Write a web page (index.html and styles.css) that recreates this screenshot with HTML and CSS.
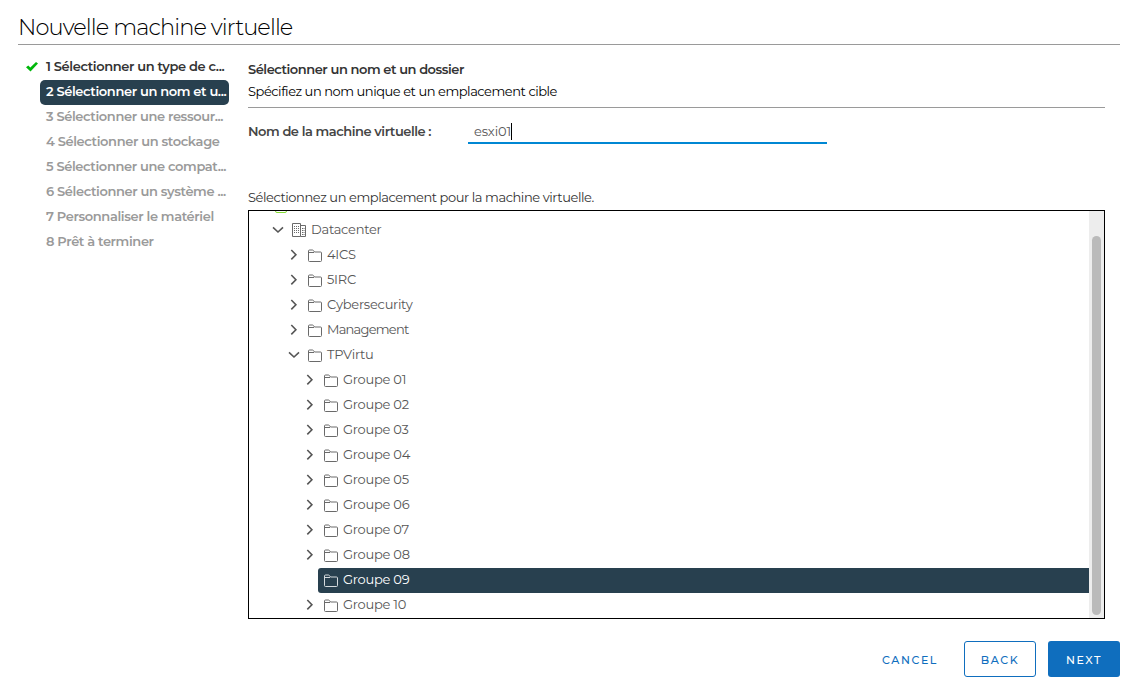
FILE: index.html
```html
<!DOCTYPE html>
<html lang="fr">
<head>
<meta charset="utf-8">
<title>Nouvelle machine virtuelle</title>
<link rel="stylesheet" href="styles.css">
</head>
<body>
<svg class="sprite" aria-hidden="true">
  <symbol id="right" viewBox="0 0 16 16"><path d="M5.300 3l4.600 4.700-4.600 4.700" fill="none" stroke="currentColor" stroke-width="1.600"/></symbol>
  <symbol id="down" viewBox="0 0 16 16"><path d="M3 5.400l5 4.600 5-4.600" fill="none" stroke="currentColor" stroke-width="1.600"/></symbol>
  <symbol id="folder" viewBox="0 0 16 16"><path d="M1.500 6V4q0-1 1-1h3q.6 0 1 .6l1 1.400h6q1 0 1 1v7.500q0 1-1 1h-11q-1 0-1-1zM1.500 5.500h5.500" fill="none" stroke="currentColor"/></symbol>
  <symbol id="datacenter" viewBox="0 0 16 16"><path d="M1.500 1.500h8v13h-8zM9.500 3.500h5v11h-5" fill="none" stroke="currentColor"/><path d="M3.500 4v8M5.500 4v8M7.500 4v8M11.500 6v7M13 6v7" fill="none" stroke="currentColor" stroke-dasharray="1 1"/></symbol>
</svg>
<div class="wizard">
  <h1 class="title">Nouvelle machine virtuelle</h1>
  <div class="body">
    <ol class="steps">
      <li class="step done"><svg class="check" viewBox="0 0 14 12"><path d="M1 6.200l2.300-1.800 2 2L11 1l2 1.400-7.500 8z" fill="#00b70b"/></svg><span>1 Sélectionner un type de c...</span></li>
      <li class="step current"><span>2 Sélectionner un nom et u...</span></li>
      <li class="step"><span>3 Sélectionner une ressour...</span></li>
      <li class="step"><span>4 Sélectionner un stockage</span></li>
      <li class="step"><span>5 Sélectionner une compat...</span></li>
      <li class="step"><span>6 Sélectionner un système ...</span></li>
      <li class="step"><span>7 Personnaliser le matériel</span></li>
      <li class="step"><span>8 Prêt à terminer</span></li>
    </ol>
    <main class="page">
      <header class="page-head">
        <h2 class="heading">Sélectionner un nom et un dossier</h2>
        <p class="subtitle">Spécifiez un nom unique et un emplacement cible</p>
      </header>
      <div class="field">
        <span class="field-label">Nom de la machine virtuelle :</span>
        <div class="input"><span class="value">esxi01</span><i class="cursor"></i></div>
      </div>
      <p class="prompt">Sélectionnez un emplacement pour la machine virtuelle.</p>
      <div class="tree-box">
        <div class="tree">
          <div class="row host-row"><i class="host"></i></div>
          <div class="row"><svg class="caret"><use href="#down"/></svg><span class="label"><svg class="icon"><use href="#datacenter"/></svg>Datacenter</span></div>
          <div class="branch">
            <div class="row"><svg class="caret"><use href="#right"/></svg><span class="label"><svg class="icon"><use href="#folder"/></svg>4ICS</span></div>
            <div class="row"><svg class="caret"><use href="#right"/></svg><span class="label"><svg class="icon"><use href="#folder"/></svg>5IRC</span></div>
            <div class="row"><svg class="caret"><use href="#right"/></svg><span class="label"><svg class="icon"><use href="#folder"/></svg>Cybersecurity</span></div>
            <div class="row"><svg class="caret"><use href="#right"/></svg><span class="label condensed"><svg class="icon"><use href="#folder"/></svg>Management</span></div>
            <div class="row"><svg class="caret"><use href="#down"/></svg><span class="label"><svg class="icon"><use href="#folder"/></svg>TPVirtu</span></div>
            <div class="branch">
              <div class="row"><svg class="caret"><use href="#right"/></svg><span class="label"><svg class="icon"><use href="#folder"/></svg>Groupe 01</span></div>
              <div class="row"><svg class="caret"><use href="#right"/></svg><span class="label"><svg class="icon"><use href="#folder"/></svg>Groupe 02</span></div>
              <div class="row"><svg class="caret"><use href="#right"/></svg><span class="label"><svg class="icon"><use href="#folder"/></svg>Groupe 03</span></div>
              <div class="row"><svg class="caret"><use href="#right"/></svg><span class="label"><svg class="icon"><use href="#folder"/></svg>Groupe 04</span></div>
              <div class="row"><svg class="caret"><use href="#right"/></svg><span class="label"><svg class="icon"><use href="#folder"/></svg>Groupe 05</span></div>
              <div class="row"><svg class="caret"><use href="#right"/></svg><span class="label"><svg class="icon"><use href="#folder"/></svg>Groupe 06</span></div>
              <div class="row"><svg class="caret"><use href="#right"/></svg><span class="label"><svg class="icon"><use href="#folder"/></svg>Groupe 07</span></div>
              <div class="row"><svg class="caret"><use href="#right"/></svg><span class="label"><svg class="icon"><use href="#folder"/></svg>Groupe 08</span></div>
              <div class="row"><svg class="caret"></svg><span class="label selected"><svg class="icon"><use href="#folder"/></svg>Groupe 09</span></div>
              <div class="row"><svg class="caret"><use href="#right"/></svg><span class="label"><svg class="icon"><use href="#folder"/></svg>Groupe 10</span></div>
            </div>
          </div>
        </div>
        <div class="scrollbar"><div class="thumb"></div></div>
      </div>
    </main>
  </div>
  <footer class="actions">
    <button class="btn link">CANCEL</button>
    <button class="btn outline">BACK</button>
    <button class="btn primary">NEXT</button>
  </footer>
</div>
</body>
</html>
```

FILE: styles.css
```css
* { box-sizing: border-box; }
body { margin: 0; background: #fff; color: #565656; font: 13px/25px Metropolis, Montserrat, Inter, sans-serif; overflow: hidden; }
h1, h2, p, ol { margin: 0; padding: 0; }
.sprite { display: none; }
.wizard { height: 690px; padding: 0 15px 0 18px; }
.title { height: 45px; padding-top: 11px; border-bottom: 1px solid #9a9a9a; color: #000; font-size: 22.5px; line-height: 32px; font-weight: 300; white-space: nowrap; letter-spacing: -.89px; }
.body { display: flex; height: 574px; }
.steps { width: 230px; flex: none; padding: 10px 19px 0 0; list-style: none; letter-spacing: -.37px; }
.step { display: flex; height: 25px; margin-left: 22px; padding-left: 6px; border-radius: 5px; color: #9a9a9a; font-weight: 600; line-height: 23px; white-space: nowrap; }
.step.done { margin-left: 7px; padding-left: 0; color: #333; }
.check { width: 14px; height: 12px; margin: 6px 7px 0 0; flex: none; }
.step.current { background: #28404f; color: #fff; }
.page { width: 857px; }
.page-head { height: 63px; padding-top: 13px; border-bottom: 1px solid #9a9a9a; }
.heading { color: #333; font-size: 13px; font-weight: 600; line-height: 22px; letter-spacing: -.45px; }
.subtitle { color: #000; line-height: 22px; letter-spacing: -.45px; }
.field { display: flex; height: 36px; padding-top: 12px; }
.field-label { width: 220px; color: #454545; font-weight: 600; line-height: 22px; letter-spacing: -.45px; }
.input { display: flex; width: 359px; height: 24px; padding-left: 6px; border-bottom: 2px solid #0087d3; line-height: 22px; }
.value { letter-spacing: -.1px; }
.cursor { width: 1px; height: 17px; margin-top: 3px; background: #000; }
.prompt { height: 66px; padding-top: 41px; color: #333; letter-spacing: -.43px; }
.tree-box { display: flex; height: 409px; border: 1px solid #000; overflow: hidden; }
.tree { flex: 1; padding-left: 21px; letter-spacing: -.25px; }
.branch { padding-left: 16px; }
.row { display: flex; height: 25px; line-height: 23px; }
.host-row { margin-top: -18px; }
.host { width: 12px; height: 14px; margin: 6px 0 0 5px; border: 1px solid #85dc35; border-radius: 2px; }
.caret { width: 16px; height: 16px; margin-top: 4px; flex: none; }
.label { display: flex; flex: 1; padding-left: 5px; white-space: nowrap; }
.condensed { letter-spacing: -.75px; }
.icon { width: 16px; height: 16px; margin: 4px 4px 0 0; flex: none; color: #6a6a6a; }
.selected { background: #28404f; border-radius: 3px 0 0 3px; color: #fff; }
.selected .icon { color: #d5dade; }
.scrollbar { width: 15px; padding: 25px 3px 3px; background: #ededed; }
.thumb { height: 379px; border-radius: 5px; background: #bababa; }
.actions { display: flex; justify-content: flex-end; gap: 12px; padding-top: 22px; }
.btn { width: 72px; height: 36px; padding: 2px 0 0; border: 1px solid transparent; border-radius: 3px; background: none; color: #0f6ebe; font: 500 11px/32px Metropolis, Montserrat, Inter, sans-serif; letter-spacing: 1.6px; }
.outline { border-color: #0f6ebe; }
.primary { background: #0f6ebe; color: #fff; }
.link { width: 84px; }
```
